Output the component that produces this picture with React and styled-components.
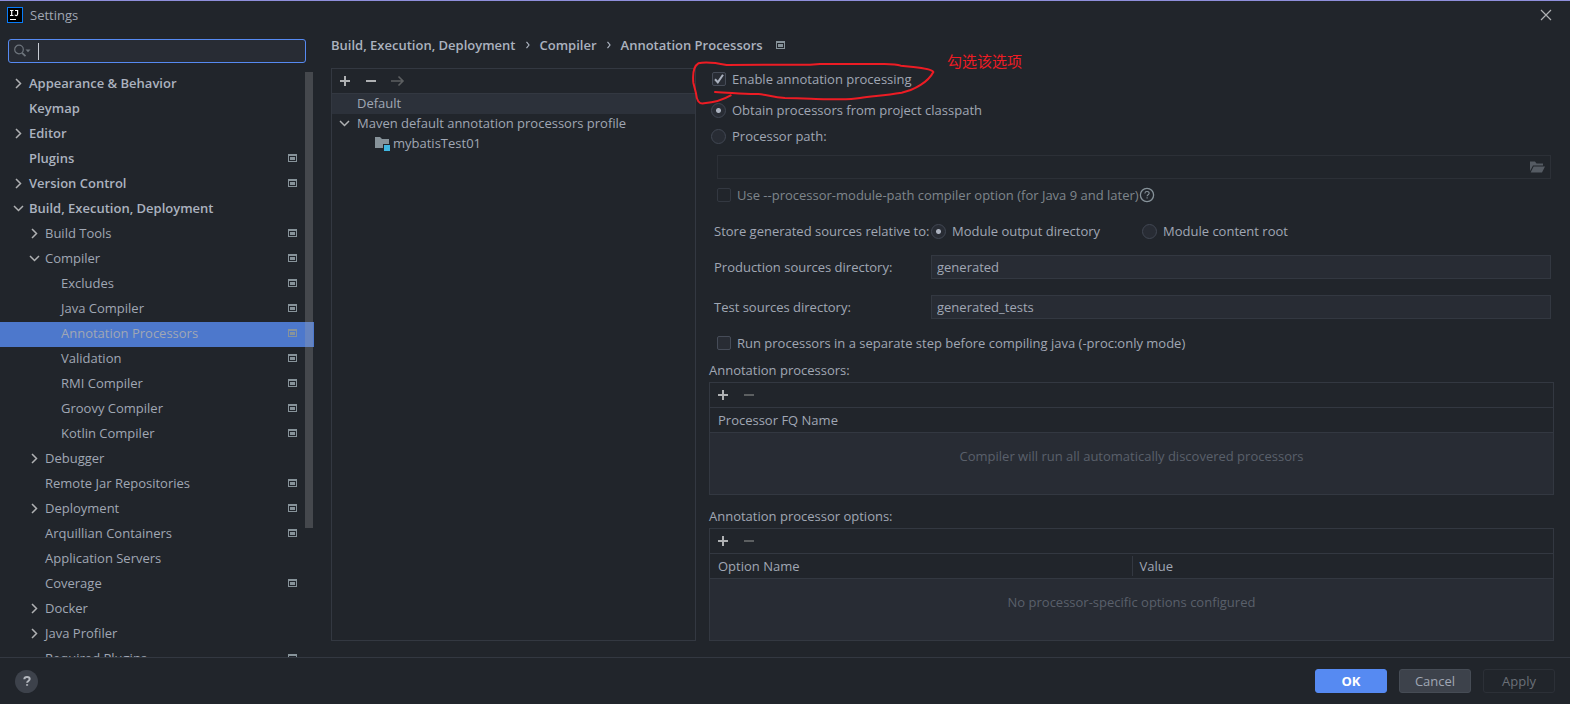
import React from "react";
import styled, { createGlobalStyle, css } from "styled-components";

const c = {
  bg: "#21252b",
  raised: "#282c34",
  row: "#2c313a",
  line: "#333841",
  faint: "#2c3037",
  text: "#a0a7b4",
  bold: "#abb2bf",
  muted: "#7f868c",
  hint: "#5a606b",
  icon: "#afb1b3",
  iconMuted: "#87939a",
  iconOff: "#5c5f61",
  blue: "#568af2",
  selected: "#4d78cc",
  red: "#ed1c24",
};

const Global = createGlobalStyle`
  *, *::before, *::after { box-sizing: border-box; }
  body { margin: 0; background: ${c.bg}; }
  body, button, input {
    font-family: "Open Sans", "Noto Sans CJK SC", sans-serif;
    font-size: 13px;
    line-height: 20px;
    color: ${c.text};
  }
`;

const Window = styled.div`
  display: flex;
  flex-direction: column;
  height: 100vh;
  border-top: 1px solid #8f8fdc;
`;

const TitleBar = styled.header`
  display: flex;
  align-items: center;
  gap: 7px;
  height: 28px;
  margin-bottom: 2px;
  padding: 0 16px 0 7px;
  flex: none;
`;

const Title = styled.h1`
  flex: 1;
  margin: 0;
  font-size: 13px;
  font-weight: 400;
`;

const IconButton = styled.button`
  display: grid;
  place-items: center;
  width: 16px;
  height: 16px;
  padding: 0;
  border: 0;
  background: none;
  color: ${c.icon};
  &:disabled { color: ${c.iconOff}; }
`;

const Body = styled.div`
  flex: 1;
  min-height: 0;
  display: grid;
  grid-template-columns: 314px minmax(0, 1fr);
`;

const Sidebar = styled.nav`
  display: flex;
  flex-direction: column;
  min-height: 0;
  padding-top: 8px;
`;

const SearchBox = styled.label`
  display: flex;
  align-items: center;
  flex: none;
  height: 24px;
  margin: 0 8px 9px;
  padding-left: 5px;
  background: ${c.raised};
  border: 1px solid ${c.blue};
  border-radius: 3px;
`;

const Caret = styled.span`
  width: 1px;
  height: 17px;
  margin-left: 7px;
  background: #c8ccd4;
`;

const SearchInput = styled.input`
  flex: 1;
  min-width: 0;
  padding: 0;
  border: 0;
  outline: 0;
  background: none;
`;

const TreeArea = styled.div`
  position: relative;
  flex: 1;
  min-height: 0;
  overflow: hidden;
`;

const ScrollThumb = styled.div`
  position: absolute;
  top: 0;
  right: 1px;
  width: 8px;
  height: 78%;
  background: rgba(166, 166, 166, 0.28);
`;

const List = styled.ul`
  margin: 0;
  padding: 0;
  list-style: none;
`;

const TreeItem = styled.li`
  display: flex;
  align-items: center;
  gap: 3px;
  height: 25px;
  padding: 0 17px 3px ${(p) => 10 + p.$level * 16}px;
  color: ${c.text};
  ${(p) => p.$level === 0 && css`
    font-weight: 600;
    color: ${c.bold};
  `}
  ${(p) => p.$selected && css`background: ${c.selected};`}
`;

const ItemName = styled.span`
  flex: 1;
  white-space: nowrap;
`;

const Slot = styled.span`
  display: grid;
  place-items: center;
  flex: none;
  width: 16px;
  height: 16px;
  color: ${c.icon};
`;

const Main = styled.main`
  display: flex;
  flex-direction: column;
  min-width: 0;
  min-height: 0;
  padding: 0 16px 16px 17px;
`;

const Breadcrumb = styled.div`
  display: flex;
  align-items: center;
  flex: none;
  gap: 10px;
  height: 28px;
  margin-bottom: 9px;
  font-weight: 600;
  color: ${c.bold};
`;

const Columns = styled.div`
  flex: 1;
  min-height: 0;
  display: grid;
  grid-template-columns: minmax(0, 365fr) minmax(0, 845fr);
  gap: 13px;
`;

const Panel = styled.section`
  display: flex;
  flex-direction: column;
  border: 1px solid ${c.line};
  ${(p) => p.$filled && css`
    flex: 1;
    background: ${c.raised};
  `}
`;

const Toolbar = styled.div`
  display: flex;
  align-items: center;
  gap: 10px;
  flex: none;
  height: 25px;
  padding-left: 5px;
  background: ${c.bg};
  border-bottom: 1px solid ${c.line};
`;

const ProfileItem = styled.li`
  display: flex;
  align-items: center;
  gap: ${(p) => (p.$nested ? 3 : 5)}px;
  height: 20px;
  padding-left: ${(p) => (p.$nested ? 42 : 4)}px;
  padding-bottom: 2px;
  ${(p) => p.$selected && css`background: ${c.row};`}
`;

const Form = styled.form`
  display: flex;
  flex-direction: column;
  min-height: 0;
`;

const Line = styled.div`
  position: relative;
  display: flex;
  align-items: center;
  flex: none;
  height: ${(p) => p.$height || 22}px;
  margin-top: ${(p) => p.$above || 0}px;
  padding-left: ${(p) => p.$indent || 0}px;
`;

const Option = styled.label`
  display: flex;
  align-items: center;
  gap: 6px;
  white-space: nowrap;
  color: ${(p) => (p.$off ? c.muted : c.text)};
`;

const Mark = styled.span`
  display: grid;
  place-items: center;
  color: ${c.bold};
  > * { grid-area: 1 / 1; margin: 0; }
  > svg { pointer-events: none; }
`;

const CheckInput = styled.input.attrs({ type: "checkbox" })`
  appearance: none;
  width: 14px;
  height: 14px;
  background: ${c.raised};
  border: 1px solid #464c58;
  border-radius: 2px;
  &:disabled { background: none; border-color: ${c.line}; }
`;

const RadioInput = styled.input.attrs({ type: "radio" })`
  appearance: none;
  width: 15px;
  height: 15px;
  background: ${c.raised};
  border: 1px solid #414753;
  border-radius: 50%;
  &:checked {
    background: radial-gradient(circle, ${c.bold} 2px, ${c.raised} 3px);
  }
`;

const RadioPair = styled.div`
  display: grid;
  grid-template-columns: 211px auto;
`;

const FieldLabel = styled.label`
  flex: none;
  width: 217px;
  white-space: nowrap;
`;

const GroupLabel = styled(FieldLabel).attrs({ as: "span" })``;

const TextInput = styled.input`
  flex: 1;
  min-width: 0;
  height: 24px;
  margin-right: 3px;
  padding: 0 5px;
  background: ${c.raised};
  border: 1px solid ${c.line};
  outline: 0;
`;

const PathBox = styled.div`
  flex: 1;
  display: flex;
  align-items: center;
  height: 24px;
  margin-right: 3px;
  padding-right: 5px;
  border: 1px solid ${c.faint};
`;

const PathInput = styled(SearchInput)`
  height: 20px;
  padding-left: 5px;
`;

const GroupTitle = styled.h2`
  flex: none;
  margin: ${(p) => p.$above}px 0 2px;
  font-size: 13px;
  font-weight: 400;
`;

const Table = styled.table`
  width: 100%;
  table-layout: fixed;
  border-collapse: separate;
  border-spacing: 0;
`;

const Th = styled.th`
  height: 25px;
  padding: 2px 0;
  text-align: left;
  font-weight: 400;
  background: ${c.bg};
  border-bottom: 1px solid ${c.line};
  span {
    display: block;
    padding-left: 7px;
    border-left: 1px solid transparent;
  }
  & + & span { border-left-color: ${c.line}; }
`;

const Empty = styled.td`
  height: 46px;
  padding: 0;
  text-align: center;
  color: ${c.hint};
`;

const Scribble = styled.svg`
  position: absolute;
  left: -19px;
  top: -18px;
  width: 247px;
  height: 57px;
  overflow: visible;
  pointer-events: none;
`;

const Note = styled.span`
  position: absolute;
  left: 238px;
  top: -17px;
  font-size: 15px;
  color: ${c.red};
`;

const Footer = styled.footer`
  display: flex;
  align-items: center;
  gap: 12px;
  flex: none;
  padding: 11px 15px;
  border-top: 1px solid ${c.line};
`;

const HelpButton = styled.button`
  display: grid;
  place-items: center;
  width: 23px;
  height: 23px;
  margin-right: auto;
  padding: 0;
  border: 0;
  border-radius: 50%;
  background: #3d424b;
  color: #b4b8bf;
`;

const ActionButton = styled.button`
  width: 72px;
  height: 24px;
  padding: 0;
  border: 1px solid #464c55;
  border-radius: 3px;
  background: #3d424b;
  line-height: 22px;
  ${(p) => p.$primary && css`
    background: ${c.blue};
    border-color: ${c.blue};
    color: #fff;
    font-weight: 700;
  `}
  &:disabled {
    background: none;
    border-color: ${c.faint};
    color: #6b7078;
  }
`;

const Logo = () => (
  <svg width="16" height="16" viewBox="0 0 16 16" aria-hidden="true">
    <rect width="16" height="16" fill="#087cfa" />
    <rect x="1" y="1" width="14" height="14" fill="#000" />
    <path d="M3 3.500h3.400M4.700 3.500v5M3 8.500h3.400M8 3.500h2.600v3.600c0 1-.5 1.500-1.400 1.500-.6 0-1-.3-1.300-.8" fill="none" stroke="#fff" strokeWidth="1.200" />
    <rect x="3" y="12" width="6" height="1" fill="#fff" />
  </svg>
);

const Chevron = ({ open }) => (
  <svg width="16" height="16" viewBox="0 0 16 16" fill="none" stroke="currentColor" strokeWidth="1.500" aria-hidden="true">
    <path d={open ? "M4 6l4.500 4.500L13 6" : "M6 4l4.500 4.500L6 13"} />
  </svg>
);

const Crumb = () => (
  <svg width="4" height="8" viewBox="0 0 4 8" fill="none" stroke="currentColor" strokeWidth="1.200" aria-hidden="true">
    <path d="M.5.8L3 4 .5 7.200" />
  </svg>
);

const ProjectIcon = () => (
  <svg width="9" height="8" viewBox="0 0 9 8" fill={c.iconMuted} aria-hidden="true">
    <path fillRule="evenodd" d="M0 0h9v8H0zM1 2v5h7V2z" />
    <path d="M2 3h5v3H2z" />
  </svg>
);

const Plus = () => (
  <svg width="16" height="16" viewBox="0 0 16 16" stroke="currentColor" strokeWidth="2" aria-hidden="true">
    <path d="M3 8h10M8 3v10" />
  </svg>
);

const Minus = () => (
  <svg width="16" height="16" viewBox="0 0 16 16" stroke="currentColor" strokeWidth="2" aria-hidden="true">
    <path d="M3 8h10" />
  </svg>
);

const Arrow = () => (
  <svg width="16" height="16" viewBox="0 0 16 16" fill="none" stroke="currentColor" strokeWidth="1.600" aria-hidden="true">
    <path d="M2 8h12M9.500 3.500L14 8l-4.500 4.500" />
  </svg>
);

const SearchIcon = () => (
  <svg width="17" height="14" viewBox="0 0 17 14" fill="none" stroke="#6e757d" strokeWidth="1.200" aria-hidden="true">
    <circle cx="5" cy="5.500" r="4.300" />
    <path d="M8 8.800l3.500 3.400" strokeWidth="1.800" />
    <path d="M11.500 5.500h5L14 8.300z" fill="#6e757d" stroke="none" />
  </svg>
);

const ModuleIcon = () => (
  <svg width="16" height="16" viewBox="0 0 16 16" aria-hidden="true">
    <path d="M1 2h5l2 2h7v5H9v4H1z" fill="#87939a" />
    <rect x="10" y="10" width="6" height="6" fill="#40b6e0" />
  </svg>
);

const OpenFolder = () => (
  <svg width="16" height="16" viewBox="0 0 16 16" fill="#555b63" aria-hidden="true">
    <path d="M1 2.500h5l1.500 2H14V6.500H4L1 12z" />
    <path d="M4.600 7.500H16l-3 6H1.600z" />
  </svg>
);

const Check = () => (
  <svg width="14" height="14" viewBox="0 0 14 14" fill="none" stroke="currentColor" strokeWidth="2" aria-hidden="true">
    <path d="M3 7.300L5.800 10.300 11 2.800" />
  </svg>
);

const QuestionShape = () => (
  <>
    <path d="M5.300 6.300c.1-1.500 1.200-2.400 2.700-2.400s2.700.9 2.700 2.200c0 1.800-2.600 1.900-2.600 3.700" />
    <path d="M8.100 11.200v1.500" />
  </>
);

const CircledHelp = () => (
  <svg width="16" height="16" viewBox="0 0 16 16" fill="none" stroke="#87939a" strokeWidth="1.300" aria-hidden="true">
    <circle cx="8" cy="8" r="6.600" />
    <g transform="translate(1.600 1.400) scale(.8)"><QuestionShape /></g>
  </svg>
);

const tree = [
  { name: "Appearance & Behavior", level: 0, arrow: "closed" },
  { name: "Keymap", level: 0 },
  { name: "Editor", level: 0, arrow: "closed" },
  { name: "Plugins", level: 0, project: true },
  { name: "Version Control", level: 0, arrow: "closed", project: true },
  { name: "Build, Execution, Deployment", level: 0, arrow: "open" },
  { name: "Build Tools", level: 1, arrow: "closed", project: true },
  { name: "Compiler", level: 1, arrow: "open", project: true },
  { name: "Excludes", level: 2, project: true },
  { name: "Java Compiler", level: 2, project: true },
  { name: "Annotation Processors", level: 2, project: true, selected: true },
  { name: "Validation", level: 2, project: true },
  { name: "RMI Compiler", level: 2, project: true },
  { name: "Groovy Compiler", level: 2, project: true },
  { name: "Kotlin Compiler", level: 2, project: true },
  { name: "Debugger", level: 1, arrow: "closed" },
  { name: "Remote Jar Repositories", level: 1, project: true },
  { name: "Deployment", level: 1, arrow: "closed", project: true },
  { name: "Arquillian Containers", level: 1, project: true },
  { name: "Application Servers", level: 1 },
  { name: "Coverage", level: 1, project: true },
  { name: "Docker", level: 1, arrow: "closed" },
  { name: "Java Profiler", level: 1, arrow: "closed" },
  { name: "Required Plugins", level: 1, project: true },
];

const CheckOption = ({ label, off, ...rest }) => (
  <Option $off={off}>
    <Mark>
      <CheckInput disabled={off} {...rest} />
      {rest.defaultChecked && <Check />}
    </Mark>
    {label}
  </Option>
);

const RadioOption = ({ label, ...rest }) => (
  <Option>
    <Mark><RadioInput {...rest} /></Mark>
    {label}
  </Option>
);

const TablePanel = ({ columns, message }) => (
  <Panel $filled>
    <Toolbar>
      <IconButton type="button" aria-label="Add"><Plus /></IconButton>
      <IconButton type="button" aria-label="Remove" disabled><Minus /></IconButton>
    </Toolbar>
    <Table>
      <thead>
        <tr>{columns.map((name) => <Th key={name} scope="col"><span>{name}</span></Th>)}</tr>
      </thead>
      <tbody>
        <tr><Empty colSpan={columns.length}>{message}</Empty></tr>
      </tbody>
    </Table>
  </Panel>
);

export default function App() {
  return (
    <Window>
      <Global />
      <TitleBar>
        <Logo />
        <Title>Settings</Title>
        <IconButton type="button" aria-label="Close">
          <svg width="12" height="12" viewBox="0 0 12 12" stroke="currentColor" strokeWidth="1.200" aria-hidden="true">
            <path d="M1 1l10 10M11 1L1 11" />
          </svg>
        </IconButton>
      </TitleBar>

      <Body>
        <Sidebar aria-label="Settings">
          <SearchBox>
            <SearchIcon />
            <Caret />
            <SearchInput type="text" aria-label="Search settings" />
          </SearchBox>
          <TreeArea>
            <List>
              {tree.map((item) => (
                <TreeItem key={item.name} $level={item.level} $selected={item.selected}>
                  <Slot>{item.arrow && <Chevron open={item.arrow === "open"} />}</Slot>
                  <ItemName>{item.name}</ItemName>
                  {item.project && <ProjectIcon />}
                </TreeItem>
              ))}
            </List>
            <ScrollThumb />
          </TreeArea>
        </Sidebar>

        <Main>
          <Breadcrumb>
            <span>Build, Execution, Deployment</span>
            <Crumb />
            <span>Compiler</span>
            <Crumb />
            <span>Annotation Processors</span>
            <Slot><ProjectIcon /></Slot>
          </Breadcrumb>

          <Columns>
            <Panel>
              <Toolbar>
                <IconButton type="button" aria-label="Add profile"><Plus /></IconButton>
                <IconButton type="button" aria-label="Remove profile"><Minus /></IconButton>
                <IconButton type="button" aria-label="Move to profile" disabled><Arrow /></IconButton>
              </Toolbar>
              <List>
                <ProfileItem $selected><Slot />Default</ProfileItem>
                <ProfileItem><Slot><Chevron open /></Slot>Maven default annotation processors profile</ProfileItem>
                <ProfileItem $nested><ModuleIcon />mybatisTest01</ProfileItem>
              </List>
            </Panel>

            <Form onSubmit={(e) => e.preventDefault()}>
              <Line $indent={3}>
                <CheckOption label="Enable annotation processing" defaultChecked />
                <Scribble viewBox="0 0 741 171" fill="none" stroke={c.red} strokeWidth="6" strokeLinecap="round" strokeLinejoin="round" aria-hidden="true">
                  <path d="M75 126C125 128 160 133 205 132C235 134 245 142 285 144C340 145 370 147 410 148C450 147 475 150 510 144C550 138 580 137 635 128C675 120 715 95 730 66C725 58 700 54 670 51L632 47C615 40 590 42 560 42L390 42L360 44L110 45C85 40 45 35 25 40C8 50 8 75 10 98L18 130C20 150 26 163 42 160C75 157 105 146 122 136" />
                </Scribble>
                <Note>勾选该选项</Note>
              </Line>
              <Line $height={26} $above={7} $indent={2}>
                <RadioOption name="source" label="Obtain processors from project classpath" defaultChecked />
              </Line>
              <Line $height={26} $indent={2}>
                <RadioOption name="source" label="Processor path:" />
              </Line>
              <Line $height={24} $above={6} $indent={8}>
                <PathBox>
                  <PathInput type="text" aria-label="Processor path" disabled />
                  <IconButton type="button" aria-label="Browse" disabled><OpenFolder /></IconButton>
                </PathBox>
              </Line>
              <Line $above={5} $indent={8}>
                <CheckOption label="Use --processor-module-path compiler option (for Java 9 and later)" off />
                <IconButton type="button" aria-label="Help on this option"><CircledHelp /></IconButton>
              </Line>
              <Line $above={14} $indent={5}>
                <GroupLabel>Store generated sources relative to:</GroupLabel>
                <RadioPair>
                  <RadioOption name="relative" label="Module output directory" defaultChecked />
                  <RadioOption name="relative" label="Module content root" />
                </RadioPair>
              </Line>
              <Line $height={24} $above={13} $indent={5}>
                <FieldLabel htmlFor="production">Production sources directory:</FieldLabel>
                <TextInput id="production" type="text" defaultValue="generated" />
              </Line>
              <Line $height={24} $above={16} $indent={5}>
                <FieldLabel htmlFor="tests">Test sources directory:</FieldLabel>
                <TextInput id="tests" type="text" defaultValue="generated_tests" />
              </Line>
              <Line $above={13} $indent={8}>
                <CheckOption label="Run processors in a separate step before compiling java (-proc:only mode)" />
              </Line>
              <GroupTitle $above={6}>Annotation processors:</GroupTitle>
              <TablePanel columns={["Processor FQ Name"]} message="Compiler will run all automatically discovered processors" />
              <GroupTitle $above={11}>Annotation processor options:</GroupTitle>
              <TablePanel columns={["Option Name", "Value"]} message="No processor-specific options configured" />
            </Form>
          </Columns>
        </Main>
      </Body>

      <Footer>
        <HelpButton type="button" aria-label="Help">
          <svg width="16" height="16" viewBox="0 0 16 16" fill="none" stroke="currentColor" strokeWidth="2" aria-hidden="true">
            <QuestionShape />
          </svg>
        </HelpButton>
        <ActionButton type="button" $primary>OK</ActionButton>
        <ActionButton type="button">Cancel</ActionButton>
        <ActionButton type="button" disabled>Apply</ActionButton>
      </Footer>
    </Window>
  );
}
